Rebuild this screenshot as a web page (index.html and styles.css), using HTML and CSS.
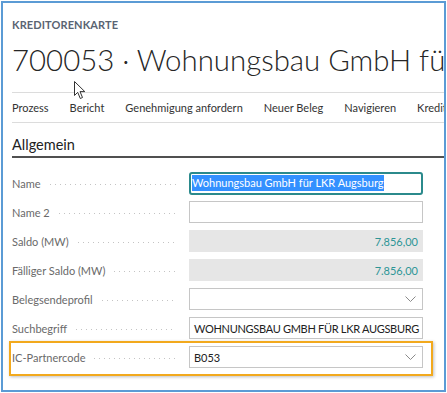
FILE: index.html
```html
<!DOCTYPE html>
<html lang="en">
<head>
    <meta charset="UTF-8">
    <meta name="viewport" content="width=device-width, initial-scale=1.0">
    <title>Kreditorenkarte</title>
    <link rel="stylesheet" href="styles.css">
</head>
<body>
    <div class="frame">
        <div class="caption">KREDITORENKARTE</div>
        <h1 class="title">700053 · Wohnungsbau GmbH für LKR Augsburg</h1>

        <div class="actions">
            <span>Prozess</span>
            <span>Bericht</span>
            <span>Genehmigung anfordern</span>
            <span>Neuer Beleg</span>
            <span>Navigieren</span>
            <span>Kreditor</span>
        </div>

        <h2 class="group">Allgemein</h2>

        <div class="fields">
            <div class="row">
                <label class="label"><span>Name</span><i class="dots"></i></label>
                <div class="box focus"><span class="sel">Wohnungsbau GmbH für LKR Augsburg</span></div>
            </div>
            <div class="row">
                <label class="label"><span>Name 2</span><i class="dots"></i></label>
                <div class="box"></div>
            </div>
            <div class="row">
                <label class="label"><span>Saldo (MW)</span><i class="dots"></i></label>
                <div class="box readonly">7.856,00</div>
            </div>
            <div class="row">
                <label class="label"><span>Fälliger Saldo (MW)</span><i class="dots"></i></label>
                <div class="box readonly">7.856,00</div>
            </div>
            <div class="row">
                <label class="label"><span>Belegsendeprofil</span><i class="dots"></i></label>
                <div class="box select">
                    <span></span>
                    <svg class="chev" width="11" height="7" viewBox="0 0 11 7"><polyline points="0.5,0.5 5.5,5.5 10.5,0.5" fill="none" stroke="#8a8a8a" stroke-width="1"/></svg>
                </div>
            </div>
            <div class="row">
                <label class="label"><span>Suchbegriff</span><i class="dots"></i></label>
                <div class="box caps">WOHNUNGSBAU GMBH FÜR LKR AUGSBURG</div>
            </div>
            <div class="row highlight">
                <label class="label"><span>IC-Partnercode</span><i class="dots"></i></label>
                <div class="box select">
                    <span>B053</span>
                    <svg class="chev" width="11" height="7" viewBox="0 0 11 7"><polyline points="0.5,0.5 5.5,5.5 10.5,0.5" fill="none" stroke="#8a8a8a" stroke-width="1"/></svg>
                </div>
            </div>
        </div>

        <!-- mouse pointer over the title -->
        <svg class="cursor" width="13" height="19" viewBox="0 0 13 19"><path d="M0.5,0.5 L0.5,14.5 L3.7,11.3 L6.3,17.5 L8.5,16.5 L6,10.6 L10.8,10.6 Z" fill="#fff" stroke="#333" stroke-width="1" stroke-linejoin="round"/></svg>
    </div>
</body>
</html>
```

FILE: styles.css
```css
body {
    margin: 0;
    padding: 0;
    background: #fff;
    font-family: Lato, "Open Sans", sans-serif;
    color: #333;
}
.frame {
    position: relative;
    margin: 1px;
    height: 387px;
    border: 2px solid #5b9bd5;
    padding-left: 9px;
    overflow: hidden;
}
.caption {
    margin-top: 15px;
    font-size: 11px;
    line-height: 14px;
    font-weight: 700;
    letter-spacing: 0.1px;
    color: #5a6472;
}
.title {
    margin: 9px 0 0;
    font-size: 29.4px;
    line-height: 38px;
    font-weight: 300;
    color: #262626;
    white-space: nowrap;
}
.actions {
    display: flex;
    gap: 21px;
    margin-top: 13px;
    height: 29px;
    align-items: center;
    border-top: 1px solid #dcdcdc;
    border-bottom: 1px solid #dcdcdc;
    font-size: 11px;
    color: #333;
    white-space: nowrap;
}
.group {
    margin: 12px 0 0;
    font-size: 14.5px;
    line-height: 20px;
    font-weight: 400;
    color: #222;
    padding-bottom: 1px;
    border-bottom: 2px solid #505050;
}
.fields {
    display: flex;
    flex-direction: column;
    align-items: flex-start;
    gap: 7px;
    margin-top: 14px;
}
.row {
    display: flex;
    align-items: center;
    height: 22px;
}
.label {
    display: flex;
    align-items: center;
    width: 164px;
    margin-right: 13px;
    font-size: 11px;
    color: #6a6a6a;
    white-space: nowrap;
}
.dots {
    flex: 1;
    height: 3px;
    margin: 3px 0 0 7px;
    background-image: radial-gradient(circle, #c4c4c4 0.7px, transparent 1px);
    background-size: 5px 3px;
    background-repeat: repeat-x;
}
.box {
    box-sizing: border-box;
    width: 234px;
    height: 22px;
    display: flex;
    align-items: center;
    padding: 0 4px;
    border: 1px solid #c6c6c6;
    font-size: 11px;
    color: #222;
    white-space: nowrap;
}
.box.caps {
    letter-spacing: -0.3px;
}
.box.focus {
    height: 23px;
    border: 2px solid #2b8a8c;
    border-radius: 3px;
    padding: 0 1px;
}
.sel {
    background: #3390ff;
    color: #fff;
    line-height: 16px;
}
.box.readonly {
    border-color: #e6e6e6;
    background: #e6e6e6;
    justify-content: flex-end;
    padding-right: 4px;
    color: #2e9596;
}
.box.select {
    justify-content: space-between;
    padding-right: 6px;
}
.chev {
    display: block;
}
.highlight {
    position: relative;
}
.highlight::after {
    content: "";
    position: absolute;
    left: -3px;
    right: -10px;
    top: -5px;
    bottom: -8px;
    border: 2px solid #f2a91d;
    box-shadow: 1px 1px 3px rgba(0, 0, 0, 0.25);
}
.cursor {
    position: absolute;
    left: 71px;
    top: 78px;
}
```
